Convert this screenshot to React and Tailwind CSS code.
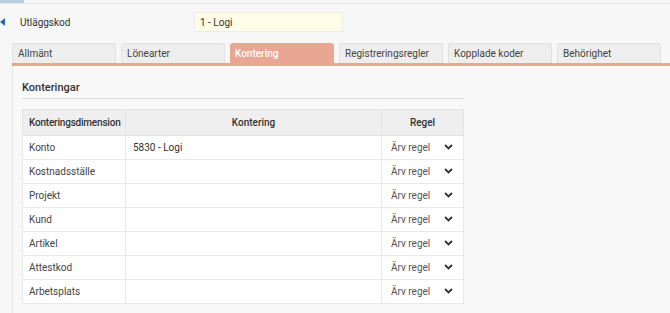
import React from 'react';

const tabs = ['Allmänt', 'Lönearter', 'Kontering', 'Registreringsregler', 'Kopplade koder', 'Behörighet'];

const rows = [
  { dim: 'Konto', kontering: '5830 - Logi' },
  { dim: 'Kostnadsställe', kontering: '' },
  { dim: 'Projekt', kontering: '' },
  { dim: 'Kund', kontering: '' },
  { dim: 'Artikel', kontering: '' },
  { dim: 'Attestkod', kontering: '' },
  { dim: 'Arbetsplats', kontering: '' },
];

const Chevron = () => (
  <svg width="9" height="6" viewBox="0 0 9 6" className="text-[#333]">
    <path d="M1 1l3.5 3.5L8 1" fill="none" stroke="currentColor" strokeWidth="1.8" />
  </svg>
);

const App = () => {
  return (
    <div className="w-[670px] h-[313px] overflow-hidden bg-[#f7f7f7] text-[10px] text-[#333]" style={{ fontFamily: 'Roboto, "Liberation Sans", sans-serif' }}>
      <div className="flex h-[4px] border-b border-[#e4e4e4]">
        <div className="w-[24px] bg-[#b9cfe1]" />
        <div className="flex-1 bg-[#f7f7f7]" />
      </div>

      <div className="flex items-center h-[20px] mt-[8px]">
        <svg width="5" height="8" viewBox="0 0 5 8" className="mr-[15px]">
          <path d="M5 0L0 4l5 4z" fill="#2f6aa8" />
        </svg>
        <span className="w-[174px]">Utläggskod</span>
        <div className="w-[149px] h-[20px] bg-[#fffde8] border border-[#ececec] flex items-center px-[5px]">1 - Logi</div>
      </div>

      <div className="ml-[12px] mt-[11px] flex gap-[5px] h-[20px]">
        {tabs.map((t) => (
          <div
            key={t}
            className={
              t === 'Kontering'
                ? 'w-[104px] h-[20px] rounded-t-[3px] bg-[#e9a693] text-white font-medium px-[5px] flex items-center'
                : 'w-[104px] h-[20px] rounded-t-[3px] bg-[#eeeeee] border-t border-x border-[#e2e2e2] text-[#444] px-[5px] flex items-center'
            }
          >
            {t}
          </div>
        ))}
      </div>
      <div className="ml-[12px] h-[3px] bg-[#e9a693]" />

      <div className="ml-[12px] border-l border-[#e6e6e6] bg-[#f9f9f9] h-[260px] pl-[9px] pt-[14px]">
        <div className="w-[442px] border-b border-[#dcdcdc] pb-[1px] text-[11px] font-medium">Konteringar</div>
        <table className="mt-[10px] w-[442px] table-fixed border-collapse border border-[#e4e4e4] bg-white">
          <colgroup>
            <col className="w-[103px]" />
            <col className="w-[256px]" />
            <col />
          </colgroup>
          <thead>
            <tr className="bg-[#efefef] h-[26px]">
              <th className="border border-[#e4e4e4] text-left font-medium pl-[6px] pr-0 whitespace-nowrap tracking-[-0.2px]">Konteringsdimension</th>
              <th className="border border-[#e4e4e4] text-center font-medium">Kontering</th>
              <th className="border border-[#e4e4e4] text-center font-medium">Regel</th>
            </tr>
          </thead>
          <tbody>
            {rows.map((r) => (
              <tr key={r.dim} className="h-[24px]">
                <td className="border border-[#e9e9e9] px-[6px] text-[#444] whitespace-nowrap">{r.dim}</td>
                <td className="border border-[#e9e9e9] px-[7px]">{r.kontering}</td>
                <td className="border border-[#e9e9e9] pl-[9px] pr-[10px]">
                  <div className="flex items-center justify-between text-[#555] whitespace-nowrap">
                    <span>Ärv regel</span>
                    <Chevron />
                  </div>
                </td>
              </tr>
            ))}
          </tbody>
        </table>
      </div>
    </div>
  );
};

export default App;
